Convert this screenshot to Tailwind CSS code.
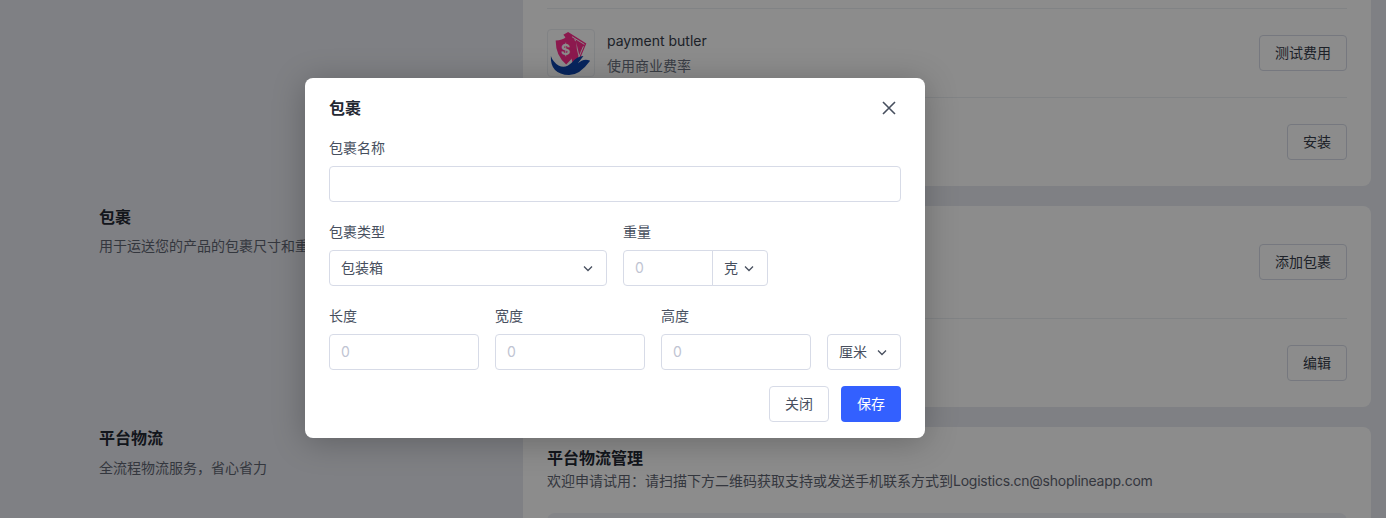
<!DOCTYPE html>
<html lang="zh">
<head>
<meta charset="utf-8">
<script src="https://cdn.jsdelivr.net/npm/@tailwindcss/browser@4"></script>
</head>
<body class="font-['Inter','Noto_Sans_CJK_SC',sans-serif] text-[#474f5e] antialiased">
<div class="relative h-[518px] w-[1386px] overflow-hidden bg-[#e7e9f0]">
  <div class="flex flex-col gap-5 pl-[99px] pr-[15px]">
    <section class="flex">
      <div class="w-[424px]"></div>
      <div class="h-[186px] w-[848px] rounded-b-lg bg-white px-6">
        <div class="h-[9px] border-b border-[#eceef3]"></div>
        <div class="flex h-[89px] items-center justify-between border-b border-[#eceef3]">
          <div class="flex items-center gap-3">
            <div class="flex h-12 w-12 items-center justify-center rounded border border-[#eceef3] bg-white">
              <svg viewBox="0 0 48 48" class="h-12 w-12">
                <path d="M16 5 L21 2 L40 14 L32 33 L26 36 L20 10 Z" fill="#ff2f8e"/>
                <path d="M25 7 L38 15 M31 31 L37 17 M28 9 L33 30" stroke="#fff" stroke-width="1" fill="none"/>
                <path d="M8 11 Q15 11 19 7 Q24 11 30 12 Q31 26 19 36 Q8 27 8 11 Z" fill="#ff2f8e"/>
                <text x="13.5" y="26" font-size="15" font-weight="700" fill="#fff">$</text>
                <path d="M3 27 Q2 46 22 47 Q33 47 44 32 Q37 29 31 35 L37 27 Q30 27 25 34 Q18 41 11 37 Q5 33 3 27 Z" fill="#0d44ac"/>
              </svg>
            </div>
            <div class="pt-[1px]">
              <div class="text-sm leading-[24px] text-[#363c4a]">payment butler</div>
              <div class="mt-[1px] text-sm leading-[24px] text-[#6b7280]">使用商业费率</div>
            </div>
          </div>
          <button class="h-9 rounded border border-[#d7dbe7] bg-white px-[15px] text-sm text-[#363c4a]">测试费用</button>
        </div>
        <div class="flex h-[88px] items-center justify-end">
          <button class="h-9 rounded border border-[#d7dbe7] bg-white px-[15px] text-sm text-[#363c4a]">安装</button>
        </div>
      </div>
    </section>

    <section class="flex h-[201px]">
      <div class="w-[424px]">
        <h3 class="-mt-px text-base font-semibold leading-[24px] text-[#242833]">包裹</h3>
        <p class="mt-[7px] text-sm leading-[20px] text-[#5f6572]">用于运送您的产品的包裹尺寸和重量</p>
      </div>
      <div class="w-[848px] rounded-lg bg-white px-6">
        <div class="flex h-[113px] items-center justify-end border-b border-[#eceef3] pb-px">
          <button class="h-9 rounded border border-[#d7dbe7] bg-white px-[15px] text-sm text-[#363c4a]">添加包裹</button>
        </div>
        <div class="flex h-[88px] items-center justify-end">
          <button class="h-9 rounded border border-[#d7dbe7] bg-white px-[15px] text-sm text-[#363c4a]">编辑</button>
        </div>
      </div>
    </section>

    <section class="flex">
      <div class="w-[424px]">
        <h3 class="-mt-px text-base font-semibold leading-[24px] text-[#242833]">平台物流</h3>
        <p class="mt-2 text-sm leading-[20px] text-[#5f6572]">全流程物流服务，省心省力</p>
      </div>
      <div class="h-[120px] w-[848px] rounded-lg bg-white px-6 pt-[19px]">
        <h3 class="text-base font-semibold leading-[24px] text-[#242833]">平台物流管理</h3>
        <p class="mt-[1px] text-sm leading-[20px] text-[#5f6572]">欢迎申请试用：请扫描下方二维码获取支持或发送手机联系方式到<span class="tracking-[-0.25px]">Logistics.cn@shoplineapp.com</span></p>
        <div class="mt-[22px] h-20 rounded-lg bg-[#f0f2f8]"></div>
      </div>
    </section>
  </div>

  <div class="absolute inset-0 bg-black/45"></div>

  <div class="absolute left-[305px] top-[78px] w-[620px] rounded-lg bg-white px-6 pb-4 shadow-[0_4px_32px_rgba(0,0,0,0.25)]">
    <div class="flex h-[60px] items-center justify-between">
      <h2 class="text-base font-semibold text-[#242833]">包裹</h2>
      <svg viewBox="0 0 16 16" class="mr-1 h-4 w-4 text-[#474f5e]" fill="none" stroke="currentColor" stroke-width="1.6"><path d="M2 2 L14 14 M14 2 L2 14"/></svg>
    </div>
    <label class="block text-sm leading-[20px]">包裹名称</label>
    <div class="mt-2 h-9 rounded border border-[#d7dbe7]"></div>

    <div class="mt-5 flex gap-4">
      <div class="w-[278px]">
        <label class="block text-sm leading-[20px]">包裹类型</label>
        <div class="mt-2 flex h-9 items-center justify-between rounded border border-[#d7dbe7] pl-[11px] pr-3 text-sm text-[#474f5e]">
          <span>包装箱</span>
          <svg viewBox="0 0 12 12" class="h-3 w-3 text-[#474f5e]" fill="none" stroke="currentColor" stroke-width="1.3"><path d="M2 4.5 L6 8.5 L10 4.5"/></svg>
        </div>
      </div>
      <div>
        <label class="block text-sm leading-[20px]">重量</label>
        <div class="mt-2 flex h-9">
          <div class="flex w-[90px] items-center rounded-l border border-[#d7dbe7] px-[11px] text-sm text-[#c0c4d2]">0</div>
          <div class="-ml-px flex w-[56px] items-center gap-[5px] rounded-r border border-[#d7dbe7] pl-[11px] text-sm text-[#474f5e]">
            <span>克</span>
            <svg viewBox="0 0 12 12" class="h-3 w-3 text-[#474f5e]" fill="none" stroke="currentColor" stroke-width="1.3"><path d="M2 4.5 L6 8.5 L10 4.5"/></svg>
          </div>
        </div>
      </div>
    </div>

    <div class="mt-5 flex gap-4">
      <div class="w-[150px]">
        <label class="block text-sm leading-[20px]">长度</label>
        <div class="mt-2 flex h-9 items-center rounded border border-[#d7dbe7] px-[11px] text-sm text-[#c0c4d2]">0</div>
      </div>
      <div class="w-[150px]">
        <label class="block text-sm leading-[20px]">宽度</label>
        <div class="mt-2 flex h-9 items-center rounded border border-[#d7dbe7] px-[11px] text-sm text-[#c0c4d2]">0</div>
      </div>
      <div class="w-[150px]">
        <label class="block text-sm leading-[20px]">高度</label>
        <div class="mt-2 flex h-9 items-center rounded border border-[#d7dbe7] px-[11px] text-sm text-[#c0c4d2]">0</div>
      </div>
      <div class="w-[74px] pt-7">
        <div class="flex h-9 items-center justify-between rounded border border-[#d7dbe7] pl-[11px] pr-3 text-sm text-[#474f5e]">
          <span>厘米</span>
          <svg viewBox="0 0 12 12" class="h-3 w-3 text-[#474f5e]" fill="none" stroke="currentColor" stroke-width="1.3"><path d="M2 4.5 L6 8.5 L10 4.5"/></svg>
        </div>
      </div>
    </div>

    <div class="mt-4 flex justify-end gap-3">
      <button class="h-9 w-[60px] rounded border border-[#d7dbe7] bg-white text-sm text-[#474f5e]">关闭</button>
      <button class="h-9 w-[60px] rounded bg-[#3360ff] text-sm text-white">保存</button>
    </div>
  </div>
</div>
</body>
</html>
